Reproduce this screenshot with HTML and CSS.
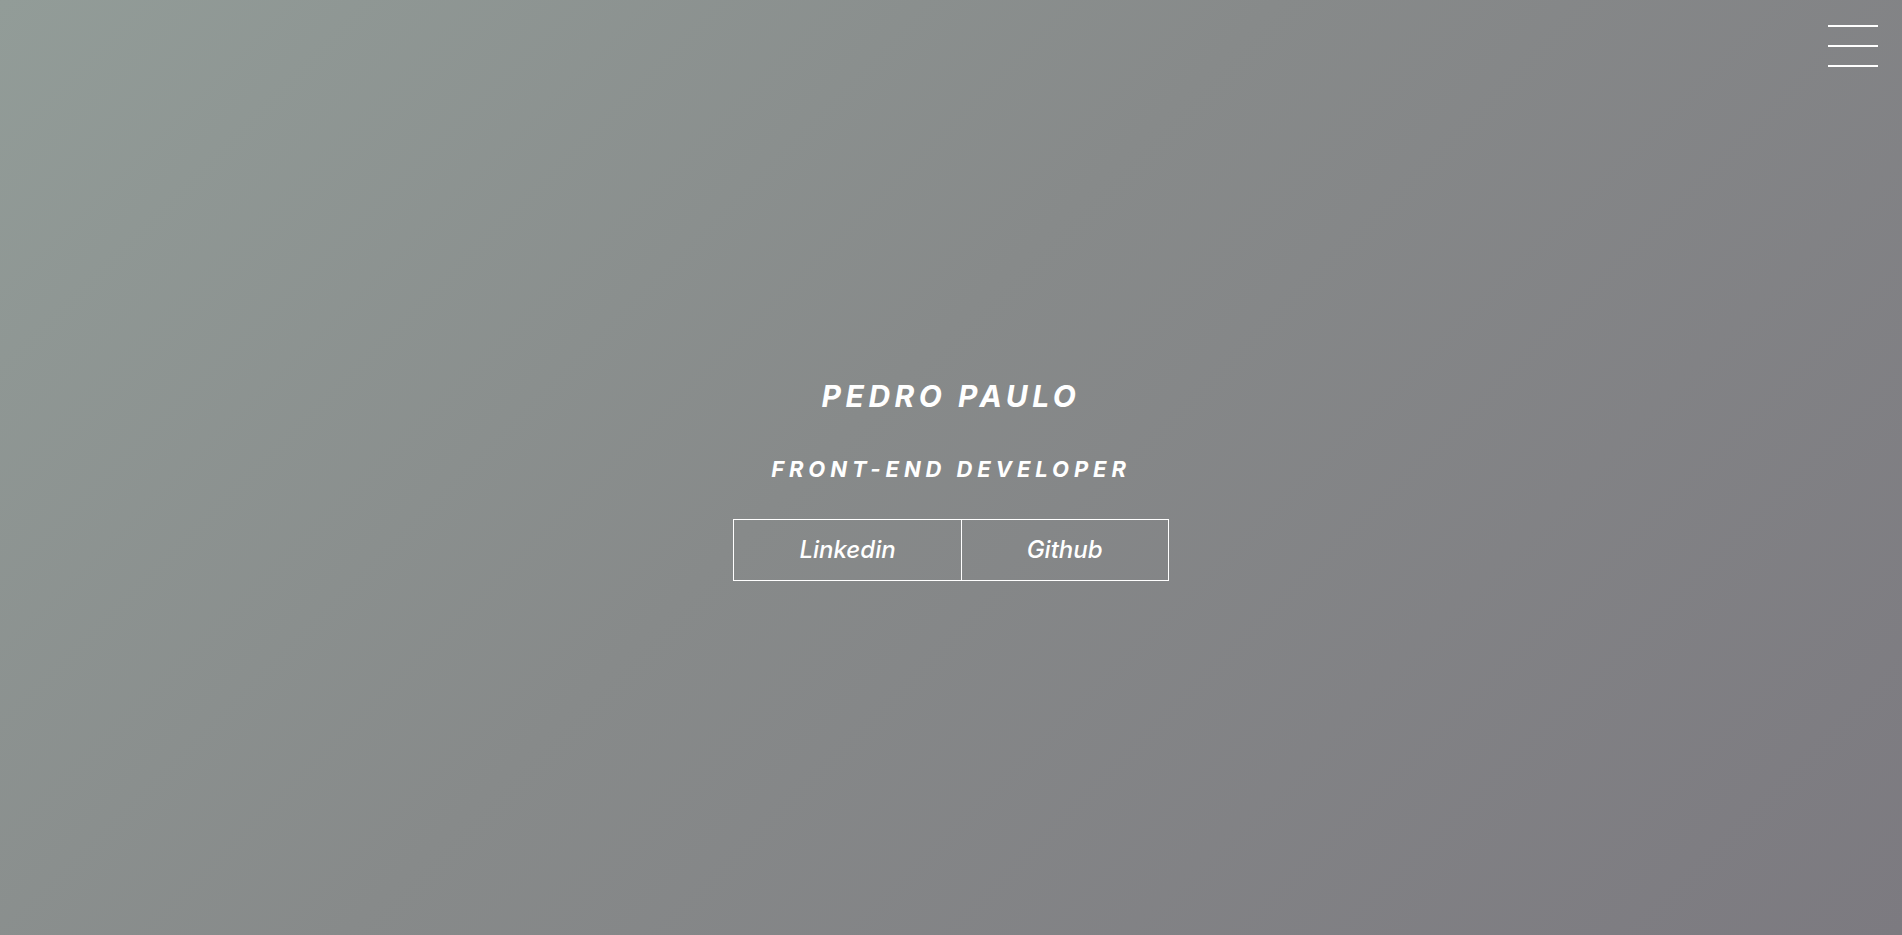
FILE: index.html
```html
<!DOCTYPE html>
<html lang="pt">
<head>
<meta charset="utf-8">
<title>Pedro Paulo</title>
<link rel="stylesheet" href="styles.css">
</head>
<body>
<button class="menu" aria-label="Menu">
  <span class="menu-line"></span>
  <span class="menu-line"></span>
  <span class="menu-line"></span>
</button>
<main class="hero">
  <h1 class="hero-title">PEDRO PAULO</h1>
  <h2 class="hero-subtitle">FRONT-END DEVELOPER</h2>
  <div class="hero-links">
    <a class="hero-link hero-link-first" href="#">Linkedin</a>
    <a class="hero-link" href="#">Github</a>
  </div>
</main>
</body>
</html>
```

FILE: styles.css
```css
* { box-sizing: border-box; }
html, body { margin: 0; padding: 0; height: 100%; }
body {
  background: linear-gradient(135deg, #929c98 0%, #878a8a 45%, #7c7a80 100%);
  font-family: Inter, "Liberation Sans", sans-serif;
  color: #fff;
  overflow: hidden;
}
.menu {
  position: absolute;
  top: 25px;
  right: 24px;
  width: 50px;
  padding: 0;
  border: 0;
  background: none;
  display: flex;
  flex-direction: column;
  gap: 18px;
}
.menu-line {
  display: block;
  height: 2px;
  width: 50px;
  background: #fff;
}
.hero {
  height: 100vh;
  display: flex;
  flex-direction: column;
  align-items: center;
  padding-top: 381px;
}
.hero-title {
  margin: 0;
  font-size: 30px;
  line-height: 30px;
  font-weight: 700;
  font-style: italic;
  letter-spacing: 4.5px;
}
.hero-subtitle {
  margin: 47px 0 0;
  font-size: 22px;
  line-height: 22px;
  font-weight: 700;
  font-style: italic;
  letter-spacing: 4.9px;
}
.hero-links {
  margin-top: 39px;
  display: flex;
}
.hero-link {
  display: block;
  height: 62px;
  line-height: 60px;
  padding: 0 65px;
  border: 1px solid #fff;
  color: #fff;
  text-decoration: none;
  font-size: 24px;
  font-style: italic;
  font-weight: 500;
}
.hero-link-first { border-right: 0; }
```
